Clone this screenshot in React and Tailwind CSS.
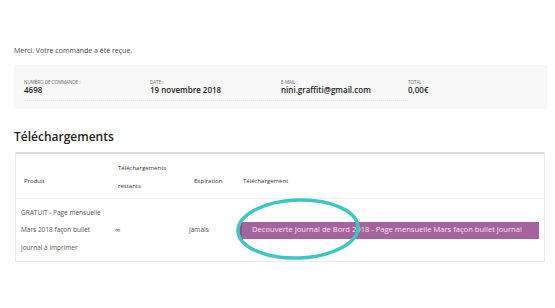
export default function App() {
  const font = { fontFamily: '"Open Sans", "Liberation Sans", sans-serif' };
  const label = 'text-[4.5px] leading-[6px] uppercase text-[#666]';
  const value = 'text-[8px] leading-[10px] font-semibold text-[#222]';
  return (
    <div className="w-[555px] h-[308px] bg-white relative overflow-hidden text-[#555]" style={font}>
      <div className="pt-[46px] px-[14px]">
        <p className="text-[7px] leading-[10px] text-[#444]">Merci. Votre commande a été reçue.</p>

        {/* order summary */}
        <div className="mt-[9px] w-[533px] h-[44px] bg-[#f8f8f8] pl-[10px] pt-[14px]">
          <div className="flex">
            <div className="flex w-[384px] border-b border-dotted border-[#e2e2e2] pb-[5px]">
              <div className="w-[126px]">
                <div className={label}>Numéro de commande :</div>
                <div className={value}>4698</div>
              </div>
              <div className="w-[131px]">
                <div className={label}>Date :</div>
                <div className={value}>19 novembre 2018</div>
              </div>
              <div className="w-[127px]">
                <div className={label}>E-mail :</div>
                <div className={value}>nini.graffiti@gmail.com</div>
              </div>
            </div>
            <div>
              <div className={label}>Total :</div>
              <div className={value}>0,00€</div>
            </div>
          </div>
        </div>

        <h2 className="mt-[20px] text-[12px] leading-[15px] font-semibold text-[#222]">Téléchargements</h2>

        {/* downloads table */}
        <div className="mt-[8px] ml-[1px] w-[530px] border-t-2 border-[#dcdcdc] border-x border-b border-x-[#ececec] border-b-[#ececec]">
          <div className="grid grid-cols-[95px_75px_49px_1fr] h-[45px] border-b border-[#f0f0f0] text-[6px] font-medium text-[#333]">
            <div className="pl-[8px] pt-[23px]">Produit</div>
            <div className="pl-[7px] pt-[5px] leading-[18px]">Téléchargements<br />restants</div>
            <div className="pl-[8px] pt-[23px]">Expiration</div>
            <div className="pl-[8px] pt-[23px]">Téléchargement</div>
          </div>
          <div className="grid grid-cols-[95px_75px_49px_1fr] h-[62px] text-[6.5px] text-[#555] items-center">
            <div className="pl-[5px] leading-[17.5px]">GRATUIT - Page mensuelle<br />Mars 2018 façon bullet<br />journal à imprimer</div>
            <div className="pl-[4px] text-[8px]">∞</div>
            <div className="pl-[3px]">Jamais</div>
            <div className="pl-[4px] pr-[5px]">
              <div className="h-[17px] bg-[#a4639c] border-l-[3px] border-[#8a5283] flex items-center pl-[10px] text-[7.6px] text-[#f3e6f1] whitespace-nowrap">
                Decouverte Journal de Bord 2018 - Page mensuelle Mars façon bullet journal
              </div>
            </div>
          </div>
        </div>
      </div>

      {/* highlight ellipse */}
      <svg className="absolute left-0 top-0" width="555" height="308">
        <ellipse cx="298" cy="229" rx="60" ry="29" fill="none" stroke="#3ec6c4" strokeWidth="3.5" transform="rotate(-2 298 229)" />
      </svg>
    </div>
  );
}
